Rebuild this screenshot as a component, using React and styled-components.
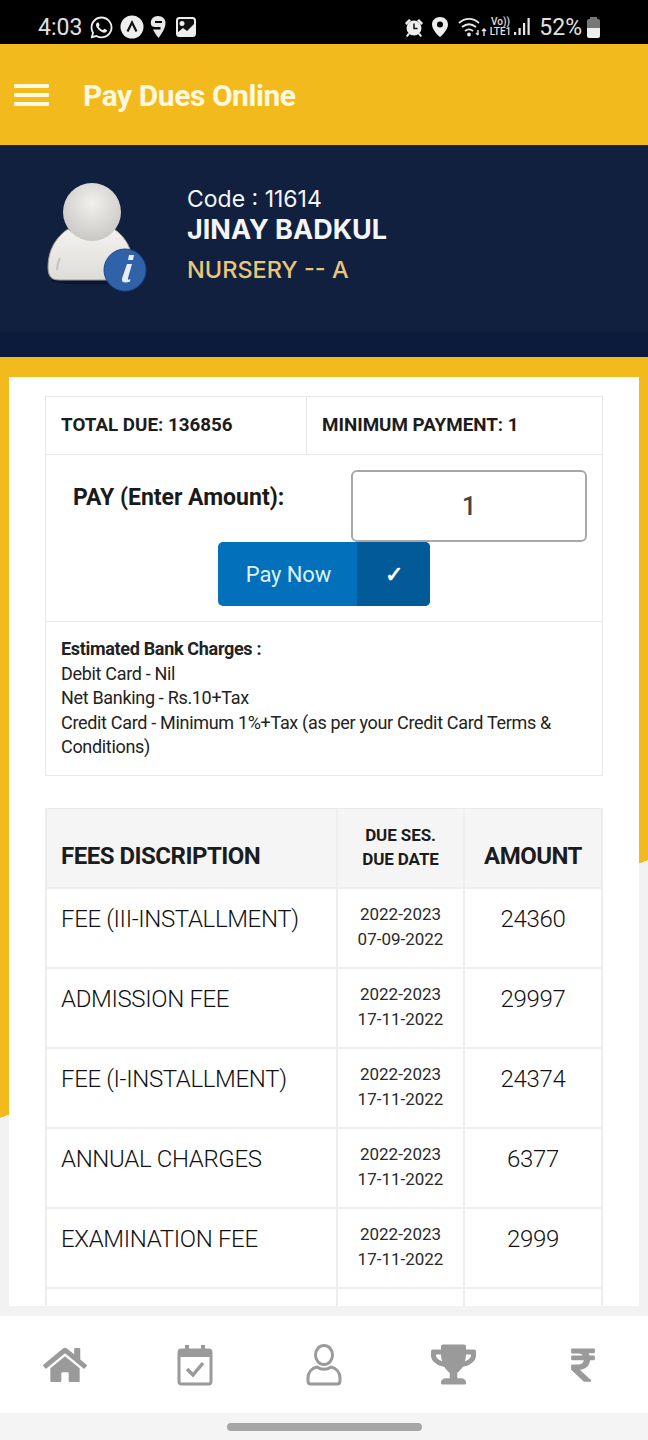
import styled, { createGlobalStyle } from "styled-components";
import { FaWhatsapp, FaHome, FaTrophy, FaRupeeSign } from "react-icons/fa";

const GlobalStyle = createGlobalStyle`
  html, body {
    margin: 0;
    padding: 0;
    background: #fff;
  }
  * {
    box-sizing: border-box;
  }
`;

const fees = [
  { name: "FEE (III-INSTALLMENT)", session: "2022-2023", date: "07-09-2022", amount: "24360" },
  { name: "ADMISSION FEE", session: "2022-2023", date: "17-11-2022", amount: "29997" },
  { name: "FEE (I-INSTALLMENT)", session: "2022-2023", date: "17-11-2022", amount: "24374" },
  { name: "ANNUAL CHARGES", session: "2022-2023", date: "17-11-2022", amount: "6377" },
  { name: "EXAMINATION FEE", session: "2022-2023", date: "17-11-2022", amount: "2999" },
  { name: "", session: "", date: "", amount: "" },
];

const Avatar = () => (
  <svg width="110" height="116" viewBox="0 0 110 116">
    <defs>
      <radialGradient id="head" cx="50%" cy="35%" r="65%">
        <stop offset="0%" stopColor="#f1f0ee" />
        <stop offset="100%" stopColor="#c9c8c4" />
      </radialGradient>
      <linearGradient id="body" x1="0" y1="0" x2="0" y2="1">
        <stop offset="0%" stopColor="#f3f2f0" />
        <stop offset="100%" stopColor="#dedcd8" />
      </linearGradient>
    </defs>
    <ellipse cx="48" cy="105" rx="40" ry="3.500" fill="#0c1630" />
    <path d="M16 104c-8 0-11-4-11-13 0-17 8-30 20-38 14 12 34 12 46 0 12 8 19 21 19 38 0 9-3 13-9 13z" fill="url(#body)" stroke="#99988f" strokeWidth="1" />
    <path d="M17 82c-2 4-3 8-3 12" fill="none" stroke="#c4c3bf" strokeWidth="2" />
    <circle cx="49" cy="36" r="29" fill="url(#head)" />
    <circle cx="82" cy="94" r="21" fill="#2f62a8" stroke="#1f4887" strokeWidth="1" />
    <path d="M86 79h5l-1 5h-5zM84 88h5l-4 14c-.5 2 .5 2 2.500 1l-.5 2.500c-5 2-9 1-8-3z" fill="#e8eef7" />
  </svg>
);

const CalendarIcon = () => (
  <svg width="36" height="42" viewBox="0 0 36 42" fill="none">
    <rect x="2" y="6" width="32" height="34" rx="2.500" stroke="currentColor" strokeWidth="3" />
    <rect x="2" y="6" width="32" height="7" fill="currentColor" />
    <rect x="8" y="1" width="4" height="7" fill="currentColor" />
    <rect x="24" y="1" width="4" height="7" fill="currentColor" />
    <path d="M10 25l6 6 10-12" stroke="currentColor" strokeWidth="3.500" />
  </svg>
);

const UserIcon = () => (
  <svg width="36" height="42" viewBox="0 0 36 42" fill="none" stroke="currentColor" strokeWidth="3">
    <ellipse cx="18" cy="11" rx="8.500" ry="9.500" />
    <path d="M11 23c-5 1-9 5-9 11v3c0 2 1 3 3 3h26c2 0 3-1 3-3v-3c0-6-4-10-9-11-4 3-10 3-14 0z" />
  </svg>
);

const AlarmIcon = () => (
  <svg width="20" height="20" viewBox="0 0 20 20">
    <circle cx="10" cy="11" r="7.500" fill="#eee" />
    <path d="M1 6l4-4 2 1.500-4.500 4.500zM19 6l-4-4-2 1.500 4.500 4.500zM4 16l-2 3 1.500 1 2.500-3zM16 16l2 3-1.500 1-2.500-3z" fill="#eee" />
    <path d="M10 6.500V11.500h3.500" fill="none" stroke="#111" strokeWidth="1.500" />
  </svg>
);

const PinIcon = () => (
  <svg width="16" height="20" viewBox="0 0 16 20">
    <path fillRule="evenodd" d="M8 0c4.500 0 8 3.300 8 7.500C16 12 11 17.500 8 20 5 17.500 0 12 0 7.500 0 3.300 3.500 0 8 0zm0 4.500a3 3 0 1 0 0 6 3 3 0 0 0 0-6z" fill="#eee" />
  </svg>
);

const WifiIcon = () => (
  <svg width="30" height="22" viewBox="0 0 30 22" fill="none" stroke="#e8e8e8" strokeWidth="1.800">
    <path d="M1 7c6-5.500 14-5.500 20 0M4 11c4.500-3.500 9.500-3.500 14 0M7 15c2.500-2 5.500-2 8 0" />
    <circle cx="11" cy="18.500" r="1" fill="#e8e8e8" />
    <path d="M20 14v5M18 17l2 2M26 20v-7M24 15l2-2 2 2" strokeWidth="1.400" />
  </svg>
);

const SignalIcon = () => (
  <svg width="17" height="18" viewBox="0 0 17 18" fill="#e8e8e8">
    <rect x="0" y="14" width="2.200" height="3" />
    <rect x="4.500" y="10" width="2.200" height="7" />
    <rect x="9" y="5" width="2.200" height="12" />
    <rect x="13.500" y="0" width="2.200" height="17" />
  </svg>
);

const ArrowBadge = () => (
  <svg width="24" height="24" viewBox="0 0 24 24">
    <circle cx="12" cy="12" r="11.500" fill="#eee" />
    <path d="M7.500 16.500L12 7.500l4.500 9" fill="none" stroke="#111" strokeWidth="2.200" />
  </svg>
);

const SwiggyIcon = () => (
  <svg width="16" height="24" viewBox="0 0 16 24" fill="#e8e8e8">
    <path d="M8 1c4.500 0 7.500 3 7.500 7 0 5-4 11-7 15-2-2.500-4-5.500-5.500-8.500h7.500V12H5C2.500 12 1 11 .8 8.500.6 4 3.500 1 8 1z" />
    <rect x="5" y="6" width="7" height="2" fill="#000" />
  </svg>
);

const PictureIcon = () => (
  <svg width="20" height="20" viewBox="0 0 20 20">
    <rect x="1" y="1" width="18" height="18" rx="2.500" fill="#111" stroke="#eee" strokeWidth="2" />
    <circle cx="6" cy="6.500" r="2.500" fill="#eee" />
    <path d="M1 16l6-5 4 3 7-7v10a2 2 0 0 1-2 2H3a2 2 0 0 1-2-2z" fill="#eee" />
  </svg>
);

const BatteryIcon = () => (
  <Battery>
    <BatteryCap />
    <BatteryBody />
  </Battery>
);

export default function App() {
  return (
    <>
      <GlobalStyle />
      <Screen>
        <StatusBar>
          <StatusGroup>
            <Clock>4:03</Clock>
            <FaWhatsapp size={25} color="#eee" />
            <ArrowBadge />
            <SwiggyIcon />
            <SpacedIcon>
              <PictureIcon />
            </SpacedIcon>
          </StatusGroup>
          <RightGroup>
            <AlarmIcon />
            <PinIcon />
            <WifiGroup>
              <WifiIcon />
              <Network>
                <span>Vo))</span>
                <span>LTE1</span>
              </Network>
              <SignalIcon />
            </WifiGroup>
            <Percent>52%</Percent>
            <BatteryIcon />
          </RightGroup>
        </StatusBar>

        <AppBar>
          <Burger>
            <span />
            <span />
            <span />
          </Burger>
          <AppTitle>Pay Dues Online</AppTitle>
        </AppBar>

        <Profile>
          <ProfileTop>
            <AvatarWrap>
              <Avatar />
            </AvatarWrap>
            <ProfileText>
              <Code>Code : 11614</Code>
              <Name>JINAY BADKUL</Name>
              <ClassName>NURSERY -- A</ClassName>
            </ProfileText>
          </ProfileTop>
          <ProfileStrip />
        </Profile>

        <Main>
          <Card>
            <SummaryBox>
              <TotalsRow>
                <TotalCell $width={260}>TOTAL DUE: 136856</TotalCell>
                <TotalCell>MINIMUM PAYMENT: 1</TotalCell>
              </TotalsRow>
              <PayRow>
                <PayTop>
                  <PayLabel>PAY (Enter Amount):</PayLabel>
                  <AmountInput>1</AmountInput>
                </PayTop>
                <PayButton>
                  <PayText>Pay Now</PayText>
                  <PayCheck>✓</PayCheck>
                </PayButton>
              </PayRow>
              <Charges>
                <strong>Estimated Bank Charges :</strong>
                <div>Debit Card - Nil</div>
                <div>Net Banking - Rs.10+Tax</div>
                <div>Credit Card - Minimum 1%+Tax (as per your Credit Card Terms &amp; Conditions)</div>
              </Charges>
            </SummaryBox>

            <FeesTable>
              <HeadCell>FEES DISCRIPTION</HeadCell>
              <HeadCell $center $small>
                DUE SES.
                <br />
                DUE DATE
              </HeadCell>
              <HeadCell $center>AMOUNT</HeadCell>
              {fees.map((fee, i) => (
                <FeeRow key={i} fee={fee} />
              ))}
            </FeesTable>
          </Card>
        </Main>

        <BottomNav>
          <NavItem>
            <FaHome size={44} />
          </NavItem>
          <NavItem>
            <CalendarIcon />
          </NavItem>
          <NavItem>
            <UserIcon />
          </NavItem>
          <NavItem>
            <FaTrophy size={45} />
          </NavItem>
          <NavItem>
            <FaRupeeSign size={38} />
          </NavItem>
        </BottomNav>

        <GestureBar>
          <GestureHandle />
        </GestureBar>
      </Screen>
    </>
  );
}

const FeeRow = ({ fee }) => (
  <>
    <NameCell>{fee.name}</NameCell>
    <DateCell>
      {fee.session}
      <br />
      {fee.date}
    </DateCell>
    <AmountCell>{fee.amount}</AmountCell>
  </>
);

const Screen = styled.div`
  width: 648px;
  height: 1440px;
  display: flex;
  flex-direction: column;
  overflow: hidden;
  font-family: Roboto, "Liberation Sans", sans-serif;
`;

const StatusBar = styled.div`
  height: 44px;
  flex: none;
  background: #000;
  color: #e0e0e0;
  display: flex;
  align-items: center;
  justify-content: space-between;
  padding: 10px 48px 0 38px;
`;

const StatusGroup = styled.div`
  display: flex;
  align-items: center;
  gap: 6px;
`;

const RightGroup = styled(StatusGroup)`
  gap: 8px;
`;

const SpacedIcon = styled.div`
  display: flex;
  margin-left: 4px;
`;

const Clock = styled.span`
  font-size: 23px;
  margin-right: 1px;
`;

const WifiGroup = styled.div`
  display: flex;
  align-items: center;
  gap: 2px;
  margin-left: 2px;
`;

const Network = styled.div`
  display: flex;
  flex-direction: column;
  font-size: 10px;
  font-weight: 500;
  line-height: 10px;
  align-items: center;
  margin-right: 1px;
`;

const Percent = styled.span`
  font-size: 23px;
  margin-right: -3px;
`;

const Battery = styled.div`
  width: 13px;
  height: 21px;
  display: flex;
  flex-direction: column;
  align-items: center;
`;

const BatteryCap = styled.div`
  width: 7px;
  height: 2px;
  background: #777;
`;

const BatteryBody = styled.div`
  width: 13px;
  height: 19px;
  border-radius: 2px;
  background: linear-gradient(#777 0 45%, #eee 45% 100%);
`;

const AppBar = styled.div`
  height: 101px;
  flex: none;
  background: #f3ba1d;
  display: flex;
  align-items: center;
  padding-left: 14px;
  gap: 34px;
`;

const Burger = styled.div`
  width: 35px;
  display: flex;
  flex-direction: column;
  gap: 5px;

  span {
    display: block;
    height: 4px;
    background: #fff9e0;
    border-radius: 1px;
  }
`;

const AppTitle = styled.div`
  font-size: 30px;
  font-weight: 700;
  letter-spacing: -0.45px;
  color: #fff8dc;
  padding-top: 2px;
`;

const Profile = styled.div`
  height: 212px;
  flex: none;
  background: #12203f;
  display: flex;
  flex-direction: column;
  border-top: 1px solid #2a2a20;
`;

const ProfileTop = styled.div`
  flex: 1;
  display: flex;
  padding: 30px 0 0 43px;
`;

const AvatarWrap = styled.div`
  width: 144px;
  flex: none;

  svg {
    filter: blur(0.6px);
  }
`;

const ProfileText = styled.div`
  display: flex;
  flex-direction: column;
  font-family: Inter, "Open Sans", sans-serif;
  padding-top: 10px;
`;

const Code = styled.div`
  font-size: 23px;
  line-height: 27px;
  color: #f4f5f7;
`;

const Name = styled.div`
  font-size: 27px;
  line-height: 32px;
  font-weight: 700;
  color: #f4f5f7;
  margin-top: 1px;
`;

const ClassName = styled.div`
  font-size: 23.500px;
  line-height: 28px;
  font-weight: 500;
  color: #e8c77c;
  margin-top: 10px;
`;

const ProfileStrip = styled.div`
  height: 25px;
  background: #0c1a3c;
`;

const Main = styled.div`
  flex: 1;
  min-height: 0;
  padding: 20px 9px 0;
  background: linear-gradient(158.3deg, #f3ba1d 0 707px, #f2f2f2 707px);
  display: flex;
`;

const Card = styled.div`
  flex: 1;
  height: 929px;
  overflow: hidden;
  background: #fff;
  padding: 19px 36px 0;
`;

const SummaryBox = styled.div`
  border: 1px solid #e8e8e8;
  height: 380px;
  display: flex;
  flex-direction: column;
`;

const TotalsRow = styled.div`
  display: flex;
  height: 58px;
  flex: none;
  border-bottom: 1px solid #e8e8e8;
`;

const TotalCell = styled.div`
  flex: ${({ $width }) => ($width ? `0 0 ${$width}px` : 1)};
  display: flex;
  align-items: center;
  padding-left: 15px;
  padding-bottom: 1px;
  font-size: 18.800px;
  font-weight: 700;
  color: #1c1c1c;

  & + & {
    border-left: 1px solid #e8e8e8;
  }
`;

const PayRow = styled.div`
  height: 167px;
  flex: none;
  border-bottom: 1px solid #e8e8e8;
  padding: 15px 15px 0 27px;
`;

const PayTop = styled.div`
  display: flex;
  justify-content: space-between;
`;

const PayLabel = styled.div`
  font-size: 23px;
  font-weight: 700;
  color: #1a1a1a;
  padding-top: 14px;
`;

const AmountInput = styled.div`
  width: 236px;
  height: 72px;
  border: 2px solid #a8a8a8;
  border-radius: 6px;
  display: flex;
  align-items: center;
  justify-content: center;
  font-size: 25px;
  font-weight: 500;
  color: #444;
`;

const PayButton = styled.div`
  width: 212px;
  height: 64px;
  margin: 0 0 0 145px;
  border-radius: 5px;
  overflow: hidden;
  display: flex;
  background: #0270ba;
  color: #dff1fb;
`;

const PayText = styled.div`
  flex: 1;
  display: flex;
  align-items: center;
  justify-content: center;
  font-size: 22px;
  letter-spacing: -0.1px;
  padding-left: 2px;
`;

const PayCheck = styled.div`
  width: 73px;
  display: flex;
  align-items: center;
  justify-content: center;
  background: #025a99;
  color: #fff;
  font-size: 22px;
  font-weight: 700;
`;

const Charges = styled.div`
  padding: 15px 30px 0 15px;
  font-size: 18px;
  line-height: 24.500px;
  letter-spacing: -0.32px;
  color: #222;

  strong {
    font-weight: 700;
  }
`;

const FeesTable = styled.div`
  margin-top: 32px;
  display: grid;
  grid-template-columns: 291px 127px 136px;
  grid-auto-rows: 80px;
  border-left: 2px solid #ececec;
  border-right: 2px solid #ececec;
  border-top: 1px solid #ececec;
`;

const Cell = styled.div`
  border-bottom: 2px solid #eeeeee;

  &:not(:nth-child(3n)) {
    border-right: 2px solid #eeeeee;
  }
`;

const HeadCell = styled(Cell)`
  background: #f5f5f5;
  display: flex;
  align-items: center;
  justify-content: ${({ $center }) => ($center ? "center" : "flex-start")};
  text-align: ${({ $center }) => ($center ? "center" : "left")};
  padding-left: ${({ $center }) => ($center ? 0 : 14)}px;
  padding-top: ${({ $small }) => ($small ? 0 : 15)}px;
  padding-bottom: ${({ $small }) => ($small ? 3 : 0)}px;
  font-size: ${({ $small }) => ($small ? 17 : 24)}px;
  line-height: ${({ $small }) => ($small ? 24 : 30)}px;
  letter-spacing: ${({ $small }) => ($small ? -0.1 : -0.5)}px;
  font-weight: 700;
  color: #1c1c1c;
`;

const NameCell = styled(Cell)`
  font-size: 24px;
  font-weight: 300;
  line-height: 30px;
  letter-spacing: -0.35px;
  padding: 15px 0 0 14px;
  color: #111;
`;

const DateCell = styled(Cell)`
  font-size: 17px;
  line-height: 24.500px;
  text-align: center;
  padding-top: 13px;
  color: #2a2a2a;
`;

const AmountCell = styled(Cell)`
  font-size: 24px;
  font-weight: 300;
  line-height: 30px;
  letter-spacing: -0.35px;
  text-align: center;
  padding-top: 15px;
  color: #111;
`;

const BottomNav = styled.div`
  height: 107px;
  flex: none;
  background: #fff;
  border-top: 10px solid #f2f2f2;
  display: flex;
  align-items: center;
  justify-content: space-between;
  padding: 0 41px;
  color: #9a9a9a;
`;

const NavItem = styled.div`
  width: 48px;
  display: flex;
  align-items: center;
  justify-content: center;
`;

const GestureBar = styled.div`
  height: 27px;
  flex: none;
  background: #f4f4f4;
  display: flex;
  align-items: center;
  justify-content: center;
`;

const GestureHandle = styled.div`
  width: 195px;
  height: 8px;
  border-radius: 4px;
  background: #a6a6a6;
`;
